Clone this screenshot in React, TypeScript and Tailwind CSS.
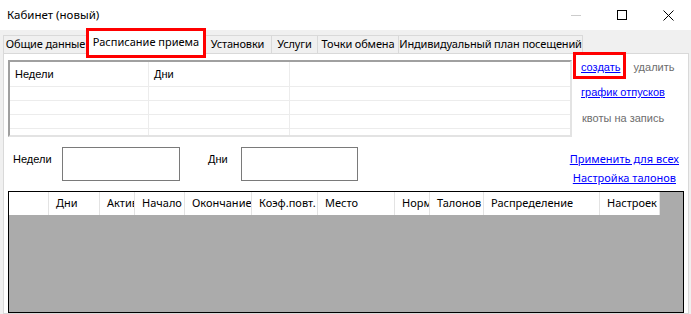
const tabs = [
  { label: 'Общие данные', w: 'w-[85px]' },
  { label: 'Расписание приема', w: 'w-[116px]', active: true },
  { label: 'Установки', w: 'w-[69px]' },
  { label: 'Услуги', w: 'w-[47px]' },
  { label: 'Точки обмена', w: 'w-[82px]' },
  { label: 'Индивидуальный план посещений', w: 'w-[185px]' },
];

const gridCols = [
  { label: '', w: 'w-[40px]' },
  { label: 'Дни', w: 'w-[51px]' },
  { label: 'Актив', w: 'w-[35px]' },
  { label: 'Начало', w: 'w-[50px]' },
  { label: 'Окончание', w: 'w-[67px]' },
  { label: 'Коэф.повт.', w: 'w-[66px]' },
  { label: 'Место', w: 'w-[77px]' },
  { label: 'Норм', w: 'w-[35px]' },
  { label: 'Талонов', w: 'w-[54px]' },
  { label: 'Распределение', w: 'w-[116px]' },
  { label: 'Настроек', w: 'w-[60px]' },
];

const ui = "font-['Segoe_UI','Noto_Sans',sans-serif]";
const ms = "font-['Liberation_Sans',Arial,sans-serif]";

const App = () => {
  return (
    <div className={`w-[691px] h-[314px] bg-[#f0f0f0] overflow-hidden flex flex-col text-black ${ui} text-[11px]`}>
      {/* Title bar */}
      <div className="h-[30px] bg-white flex items-center shrink-0">
        <span className="ml-[7px] text-[11.5px] leading-none">Кабинет (новый)</span>
        <div className="ml-auto flex h-full">
          <div className="w-[46px] h-full flex items-center justify-center">
            <div className="w-[10px] h-px bg-[#cccccc]" />
          </div>
          <div className="w-[46px] h-full flex items-center justify-center">
            <div className="w-[10px] h-[10px] border border-black" />
          </div>
          <div className="w-[46px] h-full flex items-center justify-center">
            <svg width="11" height="11" viewBox="0 0 11 11">
              <path d="M0.5 0.5 L10.5 10.5 M10.5 0.5 L0.5 10.5" stroke="#000" strokeWidth="1" />
            </svg>
          </div>
        </div>
      </div>

      {/* Tabs */}
      <div className="h-[23px] flex items-end pl-[3px] shrink-0">
        {tabs.map((t) =>
          t.active ? (
            <div
              key={t.label}
              className={`${t.w} h-[24px] -mb-px relative z-10 bg-white border border-b-0 border-[#d9d9d9] flex items-center justify-center whitespace-nowrap`}
            >
              {t.label}
              <div className="absolute -left-[3px] -right-[3px] -top-[3px] -bottom-[4px] border-[3px] border-[#ff0000]" />
            </div>
          ) : (
            <div
              key={t.label}
              className={`${t.w} h-[18px] -ml-px first:ml-0 border border-b-0 border-[#d9d9d9] bg-[#f0f0f0] flex items-center justify-center whitespace-nowrap tracking-[-0.15px]`}
            >
              {t.label}
            </div>
          )
        )}
      </div>

      {/* Tab page */}
      <div className="ml-[3px] w-[686px] flex-1 bg-white border border-[#d9d9d9] flex flex-col min-h-0">
        {/* Row 1: list + links */}
        <div className="flex pt-[6px] pl-[4px]">
          <div className={`w-[564px] h-[77px] border-2 border-t-[#a0a0a0] border-l-[#a0a0a0] border-r-[#e3e3e3] border-b-[#e3e3e3] overflow-hidden ${ms} text-[11px]`}>
            <div className="flex h-[25px] border-b border-[#ececec]">
              <div className="w-[139px] border-r border-[#ececec] flex items-center pl-[5px]">Недели</div>
              <div className="w-[141px] border-r border-[#ececec] flex items-center pl-[5px]">Дни</div>
              <div className="flex-1" />
            </div>
            {[0, 1, 2, 3].map((r) => (
              <div key={r} className="flex h-[14px] border-b border-[#ececec]">
                <div className="w-[139px] border-r border-[#ececec]" />
                <div className="w-[141px] border-r border-[#ececec]" />
                <div className="flex-1" />
              </div>
            ))}
          </div>
          <div className={`ml-[9px] mt-[1px] flex flex-col ${ms} text-[11px] leading-[13px]`}>
            <div className="flex">
              <span className="relative text-[#0000ff] underline">
                создать
                <span className="absolute -left-[8px] -right-[6px] -top-[9px] -bottom-[5px] border-[3px] border-[#ff0000]" />
              </span>
              <span className="ml-[13px] text-[#6d6d6d]">удалить</span>
            </div>
            <span className="mt-[12px] text-[#0000ff] underline">график отпусков</span>
            <span className="mt-[13px] ml-px text-[#6d6d6d]">квоты на запись</span>
          </div>
        </div>

        {/* Row 2: fields */}
        <div className="flex mt-[10px] pl-[9px] pr-[9px]">
          <span className={`w-[49px] mt-[6px] ${ms} text-[11px] leading-[13px]`}>Недели</span>
          <div className="w-[118px] h-[34px] border border-[#7a7a7a] bg-white" />
          <span className={`ml-[28px] w-[33px] mt-[6px] ${ms} text-[11px] leading-[13px]`}>Дни</span>
          <div className="w-[117px] h-[34px] border border-[#7a7a7a] bg-white" />
          <div className="ml-auto flex flex-col items-end mt-[4px] leading-[16px]">
            <span className="text-[#0000ff] underline">Применить для всех</span>
            <span className="mt-[3px] mr-[3px] text-[#0000ff] underline">Настройка талонов</span>
          </div>
        </div>

        {/* Row 3: grid */}
        <div className="ml-[4px] mt-[5px] w-[676px] flex-1 border border-black bg-[#ababab] overflow-hidden">
          <div className="flex h-[23px]">
            {gridCols.map((c, i) => (
              <div
                key={i}
                className={`${c.w} h-full bg-white border-r border-[#e3e3e3] flex items-center pl-[7px] overflow-hidden whitespace-nowrap`}
              >
                {c.label}
              </div>
            ))}
          </div>
        </div>
      </div>
    </div>
  );
};

export default App;
